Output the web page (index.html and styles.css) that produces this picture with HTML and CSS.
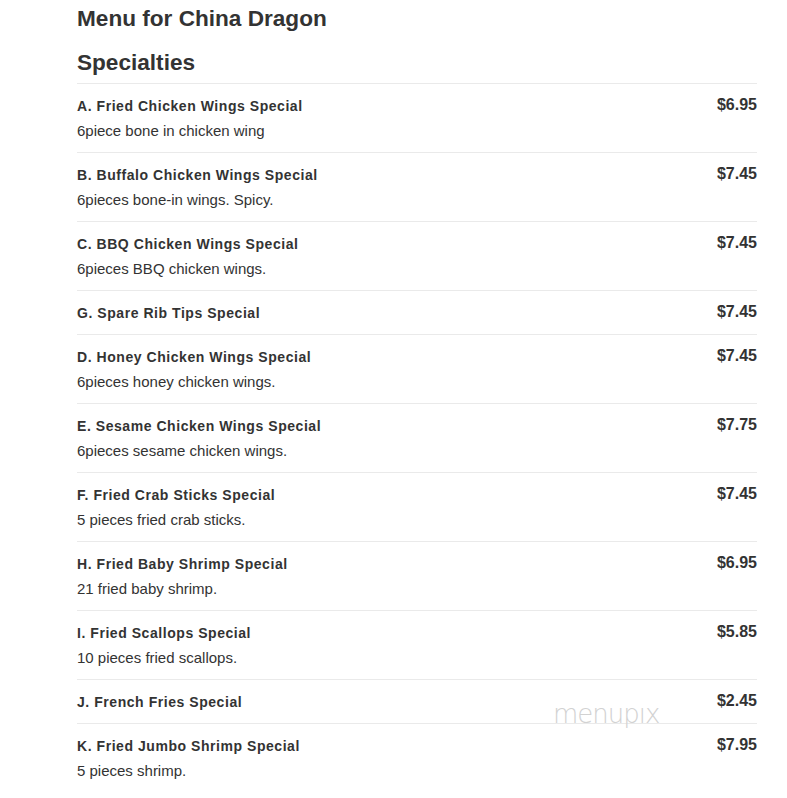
FILE: index.html
```html
<!DOCTYPE html>
<html>
<head>
<meta charset="utf-8">
<link rel="stylesheet" href="styles.css">
</head>
<body>
<main class="menu">
  <h1 class="title">Menu for China Dragon</h1>
  <h2 class="section">Specialties</h2>
  <ul class="items">
    <li class="item"><div class="info"><div class="name">A. Fried Chicken Wings Special</div><div class="desc">6piece bone in chicken wing</div></div><div class="price">$6.95</div></li>
    <li class="item"><div class="info"><div class="name">B. Buffalo Chicken Wings Special</div><div class="desc">6pieces bone-in wings. Spicy.</div></div><div class="price">$7.45</div></li>
    <li class="item"><div class="info"><div class="name">C. BBQ Chicken Wings Special</div><div class="desc">6pieces BBQ chicken wings.</div></div><div class="price">$7.45</div></li>
    <li class="item"><div class="info"><div class="name">G. Spare Rib Tips Special</div></div><div class="price">$7.45</div></li>
    <li class="item"><div class="info"><div class="name">D. Honey Chicken Wings Special</div><div class="desc">6pieces honey chicken wings.</div></div><div class="price">$7.45</div></li>
    <li class="item"><div class="info"><div class="name">E. Sesame Chicken Wings Special</div><div class="desc">6pieces sesame chicken wings.</div></div><div class="price">$7.75</div></li>
    <li class="item"><div class="info"><div class="name">F. Fried Crab Sticks Special</div><div class="desc">5 pieces fried crab sticks.</div></div><div class="price">$7.45</div></li>
    <li class="item"><div class="info"><div class="name">H. Fried Baby Shrimp Special</div><div class="desc">21 fried baby shrimp.</div></div><div class="price">$6.95</div></li>
    <li class="item"><div class="info"><div class="name">I. Fried Scallops Special</div><div class="desc">10 pieces fried scallops.</div></div><div class="price">$5.85</div></li>
    <li class="item watermarked"><div class="info"><div class="name">J. French Fries Special</div></div><div class="price">$2.45</div><span class="watermark">menupıx</span></li>
    <li class="item"><div class="info"><div class="name">K. Fried Jumbo Shrimp Special</div><div class="desc">5 pieces shrimp.</div></div><div class="price">$7.95</div></li>
  </ul>
</main>
</body>
</html>
```
FILE: styles.css
```css
html, body {
  margin: 0;
  padding: 0;
  background: #fff;
}
body {
  font-family: "Liberation Sans", Arial, Helvetica, sans-serif;
  color: #333;
}
.menu {
  width: 680px;
  margin-left: 77px;
}
.title {
  font-size: 22.6px;
  font-weight: bold;
  line-height: 28px;
  margin: 5px 0 0 0;
}
.section {
  font-size: 22.6px;
  font-weight: bold;
  line-height: 28px;
  margin: 16px 0 0 0;
  padding-bottom: 6px;
}
.items {
  list-style: none;
  margin: 0;
  padding: 0;
}
.item {
  display: flex;
  justify-content: space-between;
  align-items: flex-start;
  border-top: 1px solid #eaeaea;
  padding: 12px 0 11px;
}
.watermarked {
  position: relative;
}
.name {
  font-size: 14px;
  font-weight: bold;
  line-height: 20px;
  letter-spacing: 0.55px;
}
.desc {
  font-size: 15px;
  line-height: 20px;
  margin-top: 5px;
}
.price {
  font-size: 16px;
  font-weight: bold;
  line-height: 18px;
}
.watermark {
  position: absolute;
  left: 476px;
  top: 21px;
  font-family: "DejaVu Sans", sans-serif;
  font-weight: 100;
  font-size: 26px;
  line-height: 26px;
  color: #d2d2d2;
  letter-spacing: -1px;
}
```
